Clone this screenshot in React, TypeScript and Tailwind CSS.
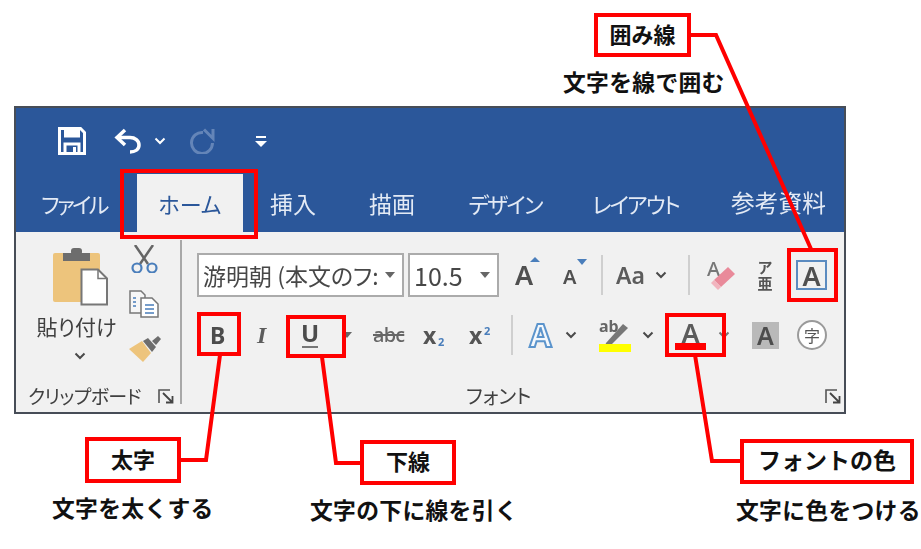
import React from "react";

const JP = "font-['Noto_Sans_CJK_JP','Noto_Sans',sans-serif]";

function Chev({ className = "" }: { className?: string }) {
  return (
    <svg viewBox="0 0 12 8" className={"w-3 h-2 shrink-0 " + className}>
      <path d="M1.5 1.5 6 6l4.5-4.5" fill="none" stroke="#4a4a4a" strokeWidth="2" />
    </svg>
  );
}
function Sep({ className = "" }: { className?: string }) {
  return <div className={"w-[2px] h-10 bg-[#cfcfcf] shrink-0 " + className} />;
}
function Launcher() {
  return (
    <svg viewBox="0 0 16 15" className="w-4 h-[15px] shrink-0">
      <path d="M1 14V1h11" fill="none" stroke="#555" strokeWidth="1.6" />
      <path d="M5 4l9 9M8 13.5h6.5V7" fill="none" stroke="#444" strokeWidth="1.8" />
    </svg>
  );
}
function Tab({ w, ml, type, children }: { w: string; ml: string; type: string; children: string }) {
  return (
    <div className={`${w} ${ml} ${type} shrink-0 text-center whitespace-nowrap leading-none font-normal text-[#e3eaf5] [font-feature-settings:"palt"]`}>
      {children}
    </div>
  );
}
function Combo({ w, text, size }: { w: string; text: string; size: string }) {
  return (
    <div className={`${w} h-11 shrink-0 bg-white border-2 border-[#ababab] flex items-center justify-between pl-[4px] pr-[7px]`}>
      <span className={`${size} leading-[34px] text-[#474747] whitespace-nowrap ${JP} [font-feature-settings:"palt"]`}>{text}</span>
      <svg viewBox="0 0 10 6" className="w-[10px] h-[6px] shrink-0"><path d="M0 0h10L5 6z" fill="#666" /></svg>
    </div>
  );
}
function Annot({ box, text, size = "text-[22px]" }: { box: string; text: string; size?: string }) {
  return (
    <div className={`absolute ${box} pb-[5px] bg-white border-4 border-[#f00] flex items-center justify-center font-bold text-[#111] leading-none whitespace-nowrap ${size} ${JP}`}>
      {text}
    </div>
  );
}
function Caption({ pos, text }: { pos: string; text: string }) {
  return (
    <div className={`absolute ${pos} font-bold text-[22.8px] leading-none tracking-[0.3px] text-[#111] whitespace-nowrap ${JP}`}>{text}</div>
  );
}

export default function App() {
  return (
    <div className={`relative w-[921px] h-[549px] bg-white overflow-hidden ${JP}`}>
      <div className="absolute left-[14px] top-[106px] w-[832px] h-[308px] border-2 border-[#474d57] flex flex-col bg-[#f1f1f1] blur-[0.5px]">
        {/* quick access */}
        <div className="h-[66px] bg-[#2b579a] flex items-center shrink-0">
          <svg viewBox="0 0 28 28" className="ml-[42px] w-7 h-7 shrink-0">
            <path d="M1.500 1.500h21l4 4v21h-25z" fill="none" stroke="#fff" strokeWidth="3" />
            <rect x="6" y="1.500" width="16" height="9" fill="#fff" />
            <path d="M7 26v-9h14v9" fill="none" stroke="#fff" strokeWidth="3" />
            <rect x="15" y="20" width="3" height="5" fill="#fff" />
          </svg>
          <svg viewBox="0 0 28 26" className="ml-[28px] w-7 h-[26px] shrink-0">
            <path d="M11 2 3 9.500l8 7.500" fill="none" stroke="#fff" strokeWidth="3.500" />
            <path d="M4 9.500h12c5 0 9 3 9 7.500s-4 7-9 7" fill="none" stroke="#fff" strokeWidth="3.500" />
          </svg>
          <svg viewBox="0 0 12 8" className="ml-3 w-3 h-2 shrink-0"><path d="M1.500 1.500 6 6l4.500-4.500" fill="none" stroke="#fff" strokeWidth="2" /></svg>
          <svg viewBox="0 0 28 26" className="ml-[23px] w-7 h-[26px] shrink-0">
            <path d="M14 4.500A10.500 10.500 0 1 0 23.500 15" fill="none" stroke="#6485b8" strokeWidth="3" />
            <path d="M15 1.500 24 10.500V1" fill="none" stroke="#6485b8" strokeWidth="3" />
          </svg>
          <svg viewBox="0 0 12 13" className="ml-[38px] w-3 h-[13px] shrink-0">
            <rect x="1" y="1" width="10" height="2" fill="#fff" />
            <path d="M0 6h12l-6 6z" fill="#fff" />
          </svg>
        </div>
        {/* tabs */}
        <div className="h-[58px] bg-[#2b579a] flex items-center shrink-0">
          <Tab w="w-[66px]" ml="ml-[25px]" type="text-[22px] tracking-[-2.6px]">ファイル</Tab>
          <div className={`ml-[30px] w-[106px] h-full shrink-0 bg-[#f1f1f1] flex items-center justify-center text-[22px] leading-none text-[#2b579a] [font-feature-settings:"palt"]`}>ホーム</div>
          <Tab w="w-[46px]" ml="ml-[27px]" type="text-[23px]">挿入</Tab>
          <Tab w="w-[46px]" ml="ml-[53px]" type="text-[23px]">描画</Tab>
          <Tab w="w-[74px]" ml="ml-[53px]" type="text-[22px] tracking-[-1.900px]">デザイン</Tab>
          <Tab w="w-[86px]" ml="ml-[50px]" type="text-[22px] tracking-[-1.800px]">レイアウト</Tab>
          <Tab w="w-[95px]" ml="ml-[53px]" type="text-[23.700px]">参考資料</Tab>
        </div>
        {/* ribbon */}
        <div className="flex-1 flex min-h-0 text-[#404040]">
          {/* clipboard */}
          <div className="w-[164px] shrink-0 flex flex-col">
            <div className="flex">
              <div className="ml-5 w-[81px] flex flex-col items-center pt-4">
                <svg viewBox="0 0 56 58" className="ml-[8px] w-14 h-[58px] shrink-0">
                  <rect x="0" y="5" width="47" height="49" rx="2" fill="#edc47c" />
                  <rect x="10" y="5" width="27" height="8" fill="#6d6d6d" />
                  <rect x="18" y="0" width="11" height="7" rx="3" fill="#6d6d6d" />
                  <path d="M28.500 21.500H45l9 9V56.500H28.500z" fill="#fff" stroke="#777" strokeWidth="2" />
                  <path d="M45 21.500V30.500h9" fill="none" stroke="#777" strokeWidth="1.500" />
                </svg>
                <div className={`mt-[7px] text-[21px] leading-[26px] whitespace-nowrap [font-feature-settings:"palt"]`}>貼り付け</div>
                <Chev className="mt-[13px] ml-[7px]" />
              </div>
              <div className="ml-3 w-[33px] flex flex-col pt-[13px]">
                <svg viewBox="0 0 28 28" className="w-7 h-7 shrink-0 ml-[1px]">
                  <path d="M5 0l13 19M23 0 10 19" fill="none" stroke="#666" strokeWidth="2.500" />
                  <circle cx="7" cy="23" r="4.500" fill="none" stroke="#4a7ebb" strokeWidth="2.200" />
                  <circle cx="22" cy="23" r="4.500" fill="none" stroke="#4a7ebb" strokeWidth="2.200" />
                </svg>
                <svg viewBox="0 0 30 28" className="mt-[17px] w-[30px] h-7 shrink-0">
                  <path d="M1 1h11l4 4v18H1z" fill="#f6f6f6" stroke="#777" strokeWidth="1.500" />
                  <path d="M4 8h3M4 12h3M4 16h3" stroke="#4a7ebb" strokeWidth="1.500" />
                  <path d="M12 8h11l6 6v13H12z" fill="#fff" stroke="#777" strokeWidth="1.500" />
                  <path d="M16 15h9M16 19h9M16 23h9" stroke="#4a7ebb" strokeWidth="1.500" />
                </svg>
                <svg viewBox="0 0 33 27" className="mt-[17px] w-[33px] h-[27px] shrink-0">
                  <path d="M0 14 13 6l9 12-8 9z" fill="#edc47c" />
                  <path d="M14 6l9 11 4-5-8-9z" fill="#6d6d6d" />
                  <path d="M23 6l6-5 3 3-5 6z" fill="#6d6d6d" />
                </svg>
              </div>
            </div>
            <div className="mt-auto mb-1 flex items-center">
              <span className={`ml-3 w-[118px] text-[19px] leading-6 whitespace-nowrap tracking-[-0.6px] [font-feature-settings:"palt"]`}>クリップボード</span>
              <span className="ml-[12px]"><Launcher /></span>
            </div>
          </div>
          <div className="w-[2px] my-2 bg-[#a8a8a8] shrink-0" />
          {/* font */}
          <div className="flex-1 flex flex-col pl-[15px] min-w-0">
            <div className="mt-[21px] flex items-center h-11">
              <Combo w="w-[207px]" size="text-[23px]" text="游明朝 (本文のフ:" />
              <Combo w="ml-1 w-[91px]" size="text-[25px]" text="10.5" />
              <div className="ml-4 w-[30px] h-8 shrink-0 relative font-['Noto_Sans',sans-serif] text-[27px] leading-8 font-semibold text-[#505050]">
                A
                <span className="absolute left-[15px] -top-[2px] w-0 h-0 border-x-[5px] border-x-transparent border-b-[5px] border-b-[#4a7ebb]" />
              </div>
              <div className="ml-[18px] w-[26px] h-8 shrink-0 relative font-['Noto_Sans',sans-serif] text-[20px] leading-9 font-semibold text-[#505050]">
                A
                <span className="absolute left-[14px] top-0 w-0 h-0 border-x-[5px] border-x-transparent border-t-[6px] border-t-[#4a7ebb]" />
              </div>
              <Sep className="ml-3" />
              <div className="ml-[13px] w-[30px] shrink-0 font-['Noto_Sans',sans-serif] text-[23px] leading-none font-semibold whitespace-nowrap text-[#5c5c5c]">Aa</div>
              <Chev className="ml-[9px]" />
              <Sep className="ml-[21px]" />
              <div className="ml-4 w-[30px] h-8 shrink-0 relative font-['Noto_Sans',sans-serif] text-[20px] leading-none font-medium text-[#777]">
                <span className="absolute left-[1px] top-0">A</span>
                <svg viewBox="0 0 30 32" className="absolute inset-0 w-[30px] h-8">
                  <path d="M8 21 22 8l7 7-14 13z" fill="#e98a9a" />
                  <path d="M5 24l3-3 7 7-3 3z" fill="#f2b4be" />
                </svg>
              </div>
              <div className="ml-[21px] w-4 shrink-0 text-center font-bold text-[#555] text-[15px] leading-4">
                ア<br />亜
              </div>
              <div className="ml-[23px] w-[31px] h-[30px] shrink-0 border-2 border-[#5b8bc0] flex items-center justify-center font-['Noto_Sans',sans-serif] text-[27px] leading-none font-semibold text-[#505050]">A</div>
            </div>
            <div className="mt-4 flex items-center h-11 font-['Noto_Sans',sans-serif]">
              <span className="ml-[13px] w-4 shrink-0 text-[23px] leading-none font-bold text-[#4c4c4c]">B</span>
              <span className="ml-[31px] w-3 shrink-0 font-['Liberation_Serif',serif] italic font-bold text-[24px] leading-none text-[#5c5c5c]">I</span>
              <span className="ml-[33px] w-4 shrink-0 flex flex-col items-center">
                <span className="text-[24px] leading-[22px] font-bold text-[#4c4c4c]">U</span>
                <span className="w-4 h-[2px] bg-[#777] mt-[2px]" />
              </span>
              <svg viewBox="0 0 10 6" className="ml-[24px] w-[10px] h-[6px] shrink-0"><path d="M0 0h10L5 6z" fill="#666" /></svg>
              <span className="ml-[21px] w-[31px] shrink-0 text-[20px] leading-none font-medium text-[#666] line-through whitespace-nowrap tracking-[-0.8px]">abc</span>
              <span className="ml-[19px] w-6 shrink-0 relative text-[23px] leading-none font-bold text-[#555] whitespace-nowrap">
                x<span className="absolute left-[15px] top-[12px] text-[11px] leading-none text-[#4a7ebb]">2</span>
              </span>
              <span className="ml-[22px] w-6 shrink-0 relative text-[23px] leading-none font-bold text-[#555] whitespace-nowrap">
                x<span className="absolute left-[15px] top-[1px] text-[11px] leading-none text-[#4a7ebb]">2</span>
              </span>
              <Sep className="ml-[18px]" />
              <span className="ml-[15px] w-[25px] shrink-0 text-center text-[32px] leading-none font-bold text-[#f4f8fc] [-webkit-text-stroke:2px_#5b94cc]">A</span>
              <Chev className="ml-3" />
              <div className="ml-[22px] w-8 h-[34px] shrink-0 relative">
                <span className="absolute left-0 top-0 text-[16px] leading-none font-bold text-[#666]">ab</span>
                <svg viewBox="0 0 32 34" className="absolute inset-0 w-8 h-[34px]">
                  <path d="M7 25 24 6l5 4-17 17-6 1z" fill="#777" />
                </svg>
                <span className="absolute left-0 bottom-0 w-8 h-2 bg-[#ffff00]" />
              </div>
              <Chev className="ml-[11px]" />
              <div className="ml-[21px] w-[31px] h-[30px] shrink-0 relative text-center text-[27px] leading-[26px] font-semibold text-[#5c5c5c]">
                A
                <span className="absolute left-0 bottom-0 w-[31px] h-[7px] bg-[#f00]" />
              </div>
              <svg viewBox="0 0 12 8" className="ml-3 w-3 h-2 shrink-0"><path d="M1.500 1.500 6 6l4.500-4.500" fill="none" stroke="#777" strokeWidth="2" /></svg>
              <span className="ml-[22px] w-[27px] h-[27px] shrink-0 bg-[#b9b9b9] text-center text-[25px] leading-[27px] font-semibold text-[#4c4c4c]">A</span>
              <span className={`ml-[18px] w-[30px] h-[30px] shrink-0 rounded-full border-2 border-[#9a9a9a] bg-white flex items-center justify-center text-[16px] leading-none text-[#555] ${JP}`}>字</span>
            </div>
            <div className="mt-auto mb-1 flex items-center pr-[3px]">
              <span className={`ml-[269px] text-[20px] leading-6 whitespace-nowrap [font-feature-settings:"palt"]`}>フォント</span>
              <span className="ml-auto"><Launcher /></span>
            </div>
          </div>
        </div>
      </div>

      {/* leader lines */}
      <svg viewBox="0 0 921 549" className="absolute inset-0 w-[921px] h-[549px] pointer-events-none">
        <g fill="none" stroke="#f00" strokeWidth="4">
          <polyline points="690,35 716,35 811,249" />
          <polyline points="180,460 206,460 220,355" />
          <polyline points="360,463 336,463 322,357" />
          <polyline points="740,461 712,461 695,355" />
        </g>
      </svg>

      {/* highlight boxes */}
      <div className="absolute left-[120px] top-[169px] w-[138px] h-[70px] border-4 border-[#f00]" />
      <div className="absolute left-[197px] top-[312px] w-[44px] h-[44px] border-4 border-[#f00]" />
      <div className="absolute left-[286px] top-[315px] w-[60px] h-[43px] border-4 border-[#f00]" />
      <div className="absolute left-[665px] top-[313px] w-[61px] h-[44px] border-4 border-[#f00]" />
      <div className="absolute left-[787px] top-[248px] w-[51px] h-[54px] border-4 border-[#f00]" />

      {/* annotations */}
      <Annot box="left-[594px] top-[13px] w-[97px] h-[44px]" text="囲み線" />
      <Annot box="left-[85px] top-[437px] w-[96px] h-[46px]" text="太字" />
      <Annot box="left-[360px] top-[440px] w-[96px] h-[45px]" text="下線" />
      <Annot box="left-[740px] top-[439px] w-[174px] h-[45px]" text="フォントの色" size="text-[23px]" />
      <Caption pos="left-[563px] top-[71px]" text="文字を線で囲む" />
      <Caption pos="left-[52px] top-[497px]" text="文字を太くする" />
      <Caption pos="left-[310px] top-[499px]" text="文字の下に線を引く" />
      <Caption pos="left-[736px] top-[499px]" text="文字に色をつける" />
    </div>
  );
}
